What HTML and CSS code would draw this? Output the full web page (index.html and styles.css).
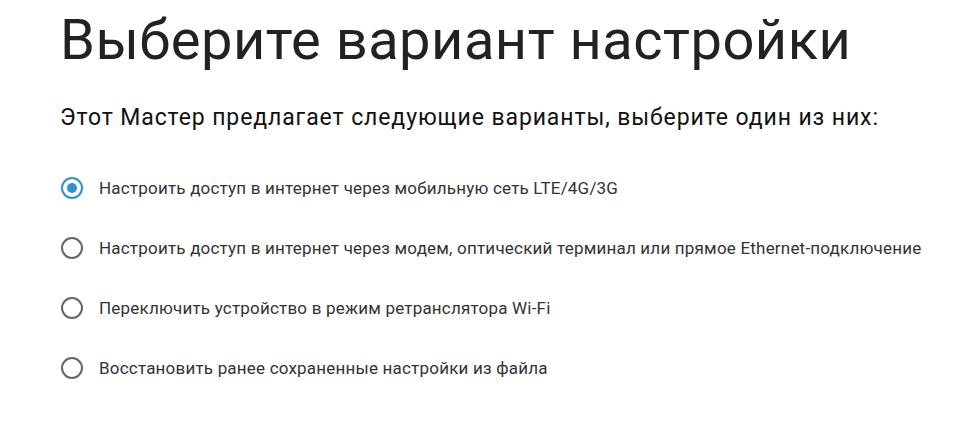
FILE: index.html
```html
<!DOCTYPE html>
<html lang="ru">
<head>
  <meta charset="UTF-8" />
  <title>Выберите вариант настройки</title>
  <link rel="stylesheet" href="styles.css">
</head>
<body>
  <div class="wizard">
    <h1>Выберите вариант настройки</h1>
    <p class="lead">Этот Мастер предлагает следующие варианты, выберите один из них:</p>

    <div class="options">
      <label class="option">
        <input type="radio" name="mode" checked>
        <span class="radio"></span>
        <span class="label">Настроить доступ в интернет через мобильную сеть LTE/4G/3G</span>
      </label>
      <label class="option">
        <input type="radio" name="mode">
        <span class="radio"></span>
        <span class="label">Настроить доступ в интернет через модем, оптический терминал или прямое Ethernet-подключение</span>
      </label>
      <label class="option">
        <input type="radio" name="mode">
        <span class="radio"></span>
        <span class="label">Переключить устройство в режим ретранслятора Wi-Fi</span>
      </label>
      <label class="option">
        <input type="radio" name="mode">
        <span class="radio"></span>
        <span class="label">Восстановить ранее сохраненные настройки из файла</span>
      </label>
    </div>
  </div>
</body>
</html>
```

FILE: styles.css
```css
body {
  font-family: Roboto, 'Noto Sans', sans-serif;
  margin: 0;
  padding: 0;
  background: #fff;
  color: #222;
}
.wizard {
  padding: 8px 0 0 60px;
}
h1 {
  font-size: 56px;
  font-weight: 400;
  letter-spacing: 0.5px;
  color: #222;
  margin: 0;
  line-height: 64px;
}
.lead {
  font-size: 23px;
  letter-spacing: 0.9px;
  color: #111;
  margin: 32px 0 0 0;
  line-height: 28px;
}
.options {
  margin-top: 26px;
}
.option {
  display: flex;
  align-items: center;
  height: 60px;
  cursor: pointer;
}
.option input {
  display: none;
}
.radio {
  width: 22px;
  height: 22px;
  border: 2px solid #666;
  border-radius: 50%;
  box-sizing: border-box;
  margin: 0 16px 0 1px;
  position: relative;
}
.option input:checked + .radio {
  border-color: #2f8fdb;
}
.option input:checked + .radio::after {
  content: '';
  position: absolute;
  left: 4px;
  top: 4px;
  width: 10px;
  height: 10px;
  border-radius: 50%;
  background: #2f8fdb;
}
.label {
  font-size: 17px;
  letter-spacing: 0.2px;
  color: #333;
}
```
